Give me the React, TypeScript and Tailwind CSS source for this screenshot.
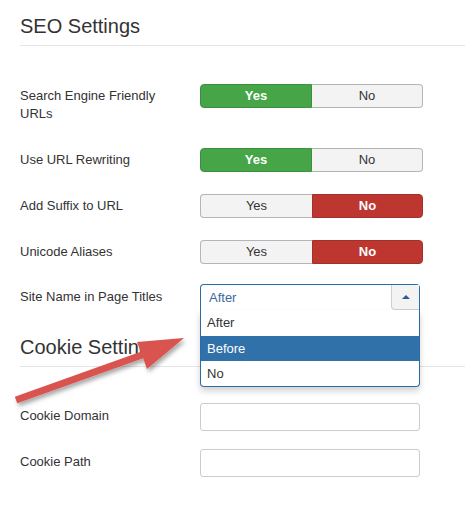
import React from 'react';

const font = "font-['Liberation_Sans',Arial,sans-serif]";

type ToggleProps = { value: 'yes' | 'no' };

const Toggle: React.FC<ToggleProps> = ({ value }) => {
  const yesOn = value === 'yes';
  return (
    <div className="flex h-6 w-[223px] text-[13px]">
      <div
        className={
          yesOn
            ? 'flex w-[112px] items-center justify-center rounded-l-[4px] border border-[#3d8f3d] bg-[#46a546] font-bold text-white'
            : 'flex w-[112px] items-center justify-center rounded-l-[4px] border border-r-0 border-[#b5b5b5] bg-[#f3f3f3] text-[#333]'
        }
      >
        Yes
      </div>
      <div
        className={
          yesOn
            ? 'flex flex-1 items-center justify-center rounded-r-[4px] border border-l-0 border-[#b5b5b5] bg-[#f3f3f3] text-[#333]'
            : 'flex flex-1 items-center justify-center rounded-r-[4px] border border-[#a5302a] bg-[#bd362f] font-bold text-white'
        }
      >
        No
      </div>
    </div>
  );
};

const Heading: React.FC<{ children: React.ReactNode }> = ({ children }) => (
  <h2 className="border-b border-[#e5e5e5] pb-[6px] text-[20px] leading-[25px] font-normal text-[#333]">
    {children}
  </h2>
);

export default function App() {
  return (
    <div className={`relative h-[516px] w-[465px] overflow-hidden bg-white pl-5 pt-[14px] ${font}`}>
      <Heading>SEO Settings</Heading>

      <div className="mt-[38px] text-[13px] text-[#333]">
        <div className="mb-[25px] flex items-start">
          <label className="w-[180px] pr-6 pt-[3px] leading-[18px]">Search Engine Friendly URLs</label>
          <Toggle value="yes" />
        </div>
        <div className="mb-[22px] flex items-start">
          <label className="w-[180px] pt-[3px] leading-[18px]">Use URL Rewriting</label>
          <Toggle value="yes" />
        </div>
        <div className="mb-[22px] flex items-start">
          <label className="w-[180px] pt-[3px] leading-[18px]">Add Suffix to URL</label>
          <Toggle value="no" />
        </div>
        <div className="mb-5 flex items-start">
          <label className="w-[180px] pt-[3px] leading-[18px]">Unicode Aliases</label>
          <Toggle value="no" />
        </div>
        <div className="flex items-start">
          <label className="w-[180px] pt-1 leading-[18px]">Site Name in Page Titles</label>
          {/* open chosen-style select */}
          <div className="relative z-10 w-[220px]">
            <div className="flex h-[26px] items-stretch rounded-t-[4px] border border-b-0 border-[#2f6ba3] bg-white">
              <span className="flex flex-1 items-center pl-2 text-[#3b6a9e]">After</span>
              <span className="flex w-[28px] items-center justify-center rounded-bl-[4px] border-b border-l border-[#cfcfcf] bg-[#f3f3f3]">
                <span className="h-0 w-0 border-x-[4px] border-b-[4px] border-x-transparent border-b-[#2a5d8f]" />
              </span>
            </div>
            <ul className="absolute left-0 right-0 top-[26px] rounded-b-[4px] border border-t-0 border-[#2f6ba3] bg-white shadow-[0_4px_6px_rgba(0,0,0,0.18)]">
              <li className="flex h-[26px] items-center pl-[6px]">After</li>
              <li className="flex h-[25px] items-center bg-[#3071a9] pl-[6px] text-white">Before</li>
              <li className="flex h-[25px] items-center pl-[6px]">No</li>
            </ul>
          </div>
        </div>
      </div>

      <div className="mt-[25px]">
        <Heading>Cookie Settings</Heading>
      </div>

      <div className="mt-9 text-[13px] text-[#333]">
        <div className="mb-[18px] flex items-start">
          <label className="w-[180px] pt-1 leading-[18px]">Cookie Domain</label>
          <input className="h-7 w-[220px] rounded-[3px] border border-[#ccc] bg-white px-2 outline-none" />
        </div>
        <div className="flex items-start">
          <label className="w-[180px] pt-1 leading-[18px]">Cookie Path</label>
          <input className="h-7 w-[220px] rounded-[3px] border border-[#ccc] bg-white px-2 outline-none" />
        </div>
      </div>

      {/* annotation arrow */}
      <svg className="pointer-events-none absolute left-0 top-0" width="465" height="516" viewBox="0 0 465 516">
        <defs>
          <filter id="arrowShadow" x="-10%" y="-20%" width="130%" height="160%">
            <feDropShadow dx="2" dy="3" stdDeviation="2" floodColor="#000" floodOpacity="0.35" />
          </filter>
        </defs>
        <polygon
          points="14.8,396.7 140.8,351.7 137,342 184,338 147,369 143.2,358.3 17.2,403.3"
          fill="#d9534f"
          filter="url(#arrowShadow)"
        />
      </svg>
    </div>
  );
}
